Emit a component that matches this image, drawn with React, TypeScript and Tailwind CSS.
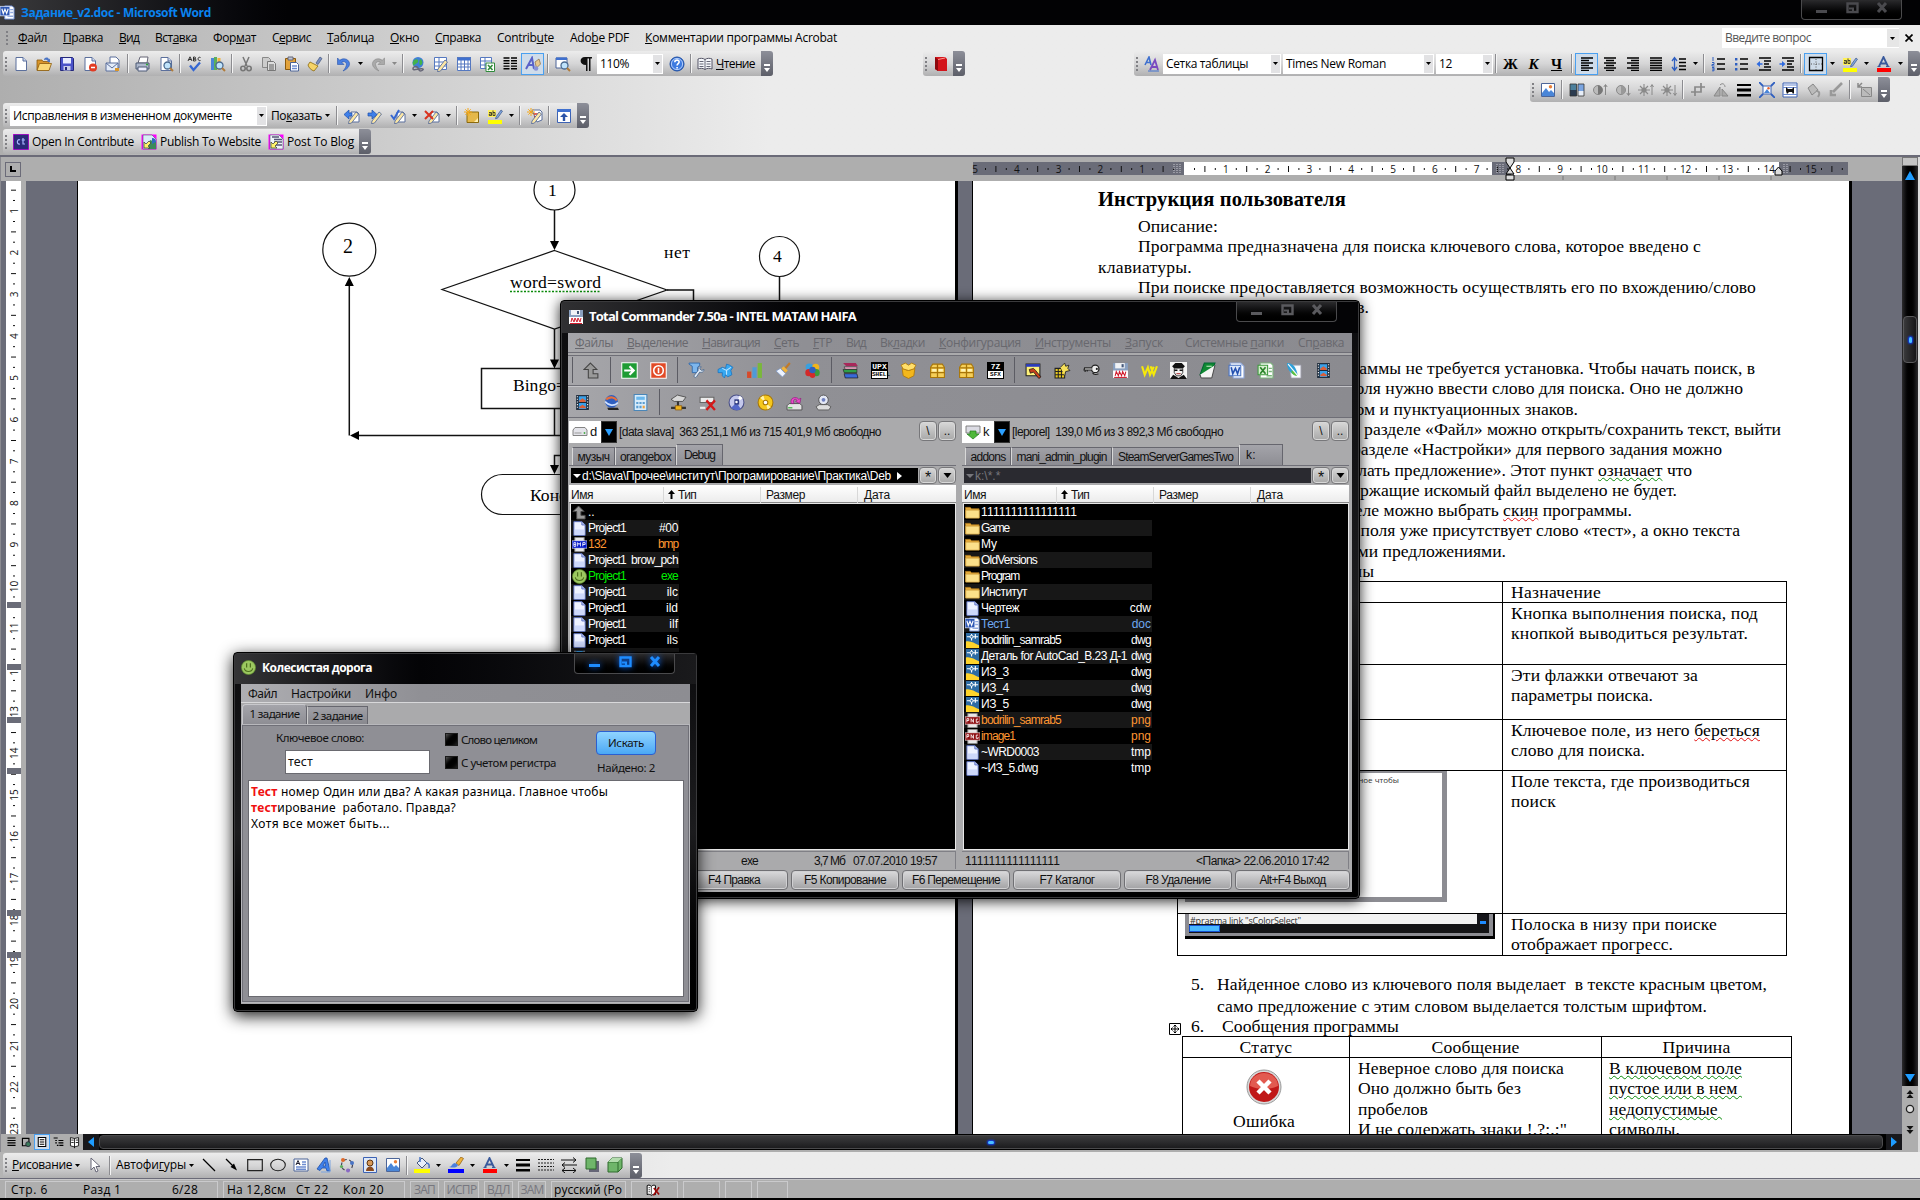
import React, { useLayoutEffect, useRef } from "react";

/* ---------- text helpers ---------- */

// Text whose letter spacing is adjusted so that it takes exactly w pixels.
function F({ w, c = "", children }: { w?: number; c?: string; children: React.ReactNode }) {
  const ref = useRef<HTMLSpanElement>(null);
  useLayoutEffect(() => {
    const el = ref.current;
    if (!el || !w) return;
    el.style.letterSpacing = "0px";
    const natural = el.getBoundingClientRect().width;
    const n = (el.textContent || "").length || 1;
    el.style.letterSpacing = (w - natural) / n + "px";
  }, [w]);
  return (
    <span ref={ref} className={"inline-block shrink-0 whitespace-pre " + c}>
      {typeof children === "string" ? mnemonic(children) : children}
    </span>
  );
}

// "&" in front of a letter underlines it.
function mnemonic(s: string): React.ReactNode {
  const i = s.indexOf("&");
  if (i < 0) return s;
  return (
    <>
      {s.slice(0, i)}
      <u>{s[i + 1]}</u>
      {s.slice(i + 2)}
    </>
  );
}

/* ---------- icons ---------- */

const sheet = <path d="M3 1.5h7l3.500 3.500v9.500h-10.500z" fill="#fff" stroke="#5b6f9c" />;
const fold = <path d="M10 1.500v3.500h3.500" fill="#cdd9f2" stroke="#5b6f9c" />;
const lens = (
  <>
    <circle cx="9.500" cy="9.500" r="3.500" fill="#bfe3fb" stroke="#4b6a90" strokeWidth="1.300" />
    <path d="M12 12l3 3" stroke="#b07b3a" strokeWidth="2" />
  </>
);
const pencil = <path d="M5 13l7-9 2.500 2-7 9-3 .800z" fill="#fbe6a4" stroke="#5b6f9c" strokeWidth=".9" />;
const lines = (xs: number[][], col = "#000") => (
  <path d={xs.map(([x, y, w]) => `M${x} ${y}h${w}`).join("")} stroke={col} strokeWidth="1.400" />
);
const film = (
  <>
    <path d="M2 1h12v14H2z" fill="#1d2a3a" />
    <path d="M4.500 2h7v5.500h-7zM4.500 8.500h7V14h-7z" fill="#3aa0e8" />
    <path d="M5 6l3-2 3 2v1.500H5zM5 12l3-2 3 2v1.500H5z" fill="#d9603a" />
    <path d="M3.200 2v12M12.800 2v12" stroke="#fff" strokeWidth="1" strokeDasharray="1 1.500" />
  </>
);
const box = (
  <>
    <path d="M1.500 5l2-3h9l2 3v9.500h-13z" fill="#f6cf58" stroke="#a97608" />
    <path d="M1.500 5.500h13M1.500 10h13M8 2v12.500" stroke="#a97608" strokeWidth="1.200" />
    <path d="M3 6.500h4v2.500H3zM9 6.500h4v2.500H9z" fill="#fff3b5" />
  </>
);
const disk = (
  <>
    <path d="M1 1h14v14H1z" fill="#8aa0c0" />
    <path d="M3 1h9v5H3z" fill="#f1f3f6" />
    <path d="M9 2h2v3H9z" fill="#44577a" />
    <path d="M1 8h14v7H1z" fill="#fff" />
    <path d="M2 14.500h12" stroke="#d11d2e" />
    <path d="M3 13l1-4 2 4 1-4 2 4 1-4 2 4 1-4" fill="none" stroke="#d11d2e" strokeWidth="1" />
  </>
);
const spark = <path d="M4 0v8M0 4h8M1.300 1.300l5.400 5.400M6.700 1.300L1.300 6.700" stroke="#f3a81c" strokeWidth="1" />;
const hi = (bar: string) => (
  <>
    <path d="M1 2h8v7H1z" fill="#fff15a" />
    <path d="M9 9l5-7 1.500 1.200-5 7-2 .5z" fill="#7fa6e0" stroke="#3d5786" strokeWidth=".7" />
    <path d="M1 12h14v4H1z" fill={bar} />
    <path d="M2 4.500h2.500v3H2.300v-1.500H4.500M6 2.500v5h2v-3H6" fill="none" stroke="#222" strokeWidth=".8" />
  </>
);
const letterA = (bar: string) => (
  <>
    <path d="M3 10.500L7.500 1 12 10.500M5 7.500h5.200" fill="none" stroke="#3a5a9c" strokeWidth="1.800" />
    <path d="M1.500 10.500h3M10 10.500h3.500" stroke="#3a5a9c" strokeWidth="1.200" />
    <path d="M1 12h14v4H1z" fill={bar} />
  </>
);
const sun = (
  <>
    <circle cx="6" cy="8" r="2.600" fill="#8a8a8a" />
    <path d="M6 2v12M0 8h12M2 4l8 8M10 4l-8 8" stroke="#8a8a8a" strokeWidth="1.100" />
  </>
);
const pc = (
  <>
    <path d="M1.500 1.500h13v13h-13z" fill="#fff" stroke="#4c6598" />
    <path d="M2 11l4-5 3 4 2-2 3 3v3H2z" fill="#4a86d8" />
    <circle cx="10.500" cy="4.800" r="1.700" fill="#e8803a" />
  </>
);
const red = "#d9321e";

const ICONS: Record<string, React.ReactNode> = {
  doc: <>{sheet}{fold}</>,
  file: <><path d="M2 .7h8.500l3.500 3.500v11.100H2z" fill="#eef2ff" stroke="#5b70c0" /><path d="M3 9h10v6H3z" fill="#cdd8fa" /><path d="M10.500.7v3.500H14" fill="#b9c6f2" stroke="#5b70c0" /></>,
  open: <><path d="M1 4h5l1 1.500h6V14H1z" fill="#d9952b" stroke="#8b5a0e" strokeWidth=".8" /><path d="M3.500 7.500h12L13 14.500H1z" fill="#fbd978" stroke="#8b5a0e" strokeWidth=".8" /><path d="M8 3c2-2 4-2 5 .500l1-1V6h-3l1-1c-1-1-2-1.500-4-1z" fill="#4a74c4" /></>,
  save: <><path d="M1.500 1.500h12l1 1v12h-13z" fill="#4b53c9" stroke="#24287c" /><path d="M4 2h8v5.500H4z" fill="#e8ecff" /><path d="M4.500 10h7v4.500h-7z" fill="#c9cde8" /><path d="M6 11h2v3H6z" fill="#24287c" /></>,
  perm: <>{sheet}{fold}<circle cx="11" cy="11.500" r="4" fill="#e23b22" /><path d="M9 11.500h4" stroke="#fff" strokeWidth="1.600" /></>,
  mail: <><path d="M5 1h6l3 3v8H5z" fill="#fff" stroke="#5b6f9c" /><path d="M1 7h12v8H1z" fill="#e4ecf8" stroke="#5b6f9c" /><path d="M1 7l6 5 6-5" fill="none" stroke="#5b6f9c" /><path d="M10 12h4v3h-4z" fill="#d9952b" /></>,
  print: <><path d="M5 1h8l-1 6H3z" fill="#fff" stroke="#667" /><path d="M1 7h13v6H1z" fill="#aeb8cc" stroke="#4d5a74" /><path d="M3 11h9v4H3z" fill="#eef" stroke="#4d5a74" /><path d="M11 8.500h2" stroke="#2ea838" strokeWidth="1.500" /></>,
  preview: <>{sheet}{fold}{lens}</>,
  spell: <><path d="M1 5L3 .8 5 5M1.700 3.500h2.600M6.500 1v4h1.300c1.700 0 1.700-2 0-2H6.500h1c1.500 0 1.500-2 0-2zM13.500 1.500c-3-1.500-3.500 4 0 3" fill="none" stroke="#222" strokeWidth=".9" /><path d="M3 9.500l3.500 4.500L13 6.500" fill="none" stroke="#3567d2" strokeWidth="2.300" /></>,
  research: <><path d="M1 2h3v12H1z" fill="#4a86d8" /><path d="M4 1h3v13H4z" fill="#5bb05a" /><path d="M7.500 2h3v12h-3z" fill="#f0b43c" />{lens}</>,
  cut: <><path d="M5 1l4 9M11 1L7 10" stroke="#777" strokeWidth="1.500" /><circle cx="5" cy="12.500" r="2.200" fill="none" stroke="#777" strokeWidth="1.600" /><circle cx="11" cy="12.500" r="2.200" fill="none" stroke="#777" strokeWidth="1.600" /></>,
  copy: <><path d="M1.500 1.500h6l2 2v8h-8z" fill="#ccc" stroke="#888" /><path d="M6.500 5.500h6l2 2v7h-8z" fill="#ddd" stroke="#777" />{lines([[8, 9, 5], [8, 11, 5], [8, 13, 5]], "#888")}</>,
  paste: <><path d="M1.500 2.500h10v11h-10z" fill="#e2a33c" stroke="#8b5a0e" /><path d="M4 1h5v3H4z" fill="#bcc4d4" stroke="#667" /><path d="M6.500 6.500h6l2 2v6.500h-8z" fill="#fff" stroke="#4c6598" />{lines([[8, 10, 5], [8, 12.500, 5]], "#6d8cd0")}</>,
  brush: <><path d="M9 7l4-6 2 1.500-4 6z" fill="#7b8fc4" stroke="#44577a" strokeWidth=".7" /><path d="M3 6l8 4-4 5c-3-1-5-3-6-6z" fill="#f6d468" stroke="#8b6a0e" strokeWidth=".8" /></>,
  undo: <path d="M1.500 2v6.500h6.500L5.700 6.200C9 4.500 12 7 9.500 11.500 8.800 13 8 14 7 15c6-2.500 8-7 5.500-10C10.500 2.300 6.500 2.200 3.800 4.300z" fill="#4a7fe0" stroke="#2c54a8" strokeWidth=".6" />,
  redo: <path d="M14.500 2v6.500H8l2.300-2.300C7 4.500 4 7 6.500 11.500 7.200 13 8 14 9 15 3 12.500 1 8 3.500 5 5.500 2.300 9.500 2.200 12.200 4.300z" fill="#aaa" stroke="#888" strokeWidth=".6" />,
  globe: <><circle cx="8" cy="6.500" r="5.500" fill="#3f7fd6" /><path d="M4 4c3-2 5 0 4 2s-4 2-4 4c-2-2-1.500-4 0-6zM10 3c3 1 3 5 1 6s-2-4-1-6z" fill="#43b24a" /><path d="M3 13c0-3 4-3 5-1s4 0 5 1-3 3-4 1-6 1-6-1z" fill="none" stroke="#667" strokeWidth="1.500" /></>,
  tblpen: <><path d="M1.500 1.500h12v12h-12zM1.500 6h12M1.500 10h12M6 1.500v12" fill="#fff" stroke="#5578c0" />{pencil}</>,
  tbl: <><path d="M1 1.500h14v13H1z" fill="#fff" /><path d="M1 1h14v3.500H1z" fill="#3f70cf" /><path d="M1.500 1.500h13v13h-13zM1.500 8h13M1.500 11h13M5 4v10.500M8.500 4v10.500M12 4v10.500" fill="none" stroke="#5578c0" /></>,
  xltbl: <><path d="M1.500 1.500h11v11h-11zM1.500 5h11M1.500 9h11M6 1.500v11" fill="#fff" stroke="#5578c0" /><path d="M7 7h8.500v8.500H7z" fill="#fff" stroke="#2f8a3a" /><path d="M9 9l4.500 5M13.500 9L9 14" stroke="#2f8a3a" strokeWidth="1.600" /></>,
  cols: lines([[1.500, 2, 6], [1.500, 4.700, 6], [1.500, 7.400, 6], [1.500, 10.100, 6], [1.500, 12.800, 6], [9, 2, 6], [9, 4.700, 6], [9, 7.400, 6], [9, 10.100, 6], [9, 12.800, 6]]),
  draw: <><path d="M1 13L7 2l2 11M3.500 9h5" fill="none" stroke="#5a62c8" strokeWidth="2" /><path d="M10 6l4-3 1.500 5-4 4z" fill="#e7c890" stroke="#8b6a3e" strokeWidth=".7" /><circle cx="11" cy="12.500" r="2.300" fill="#8892d8" /></>,
  map: <><path d="M1 2h11v10H1z" fill="#fff" stroke="#4c6598" /><path d="M1 1.500h11V4H1z" fill="#3f70cf" />{lens}</>,
  para: <path d="M7 1h7v1.500h-1.500V15H11V2.500H9.500V15H8V9C1 9 1 1 7 1z" fill="#111" />,
  help: <><circle cx="8" cy="8" r="7" fill="#3d7be0" stroke="#1f4da0" /><circle cx="8" cy="8" r="5.600" fill="none" stroke="#cfe0ff" strokeWidth=".8" /><path d="M5.800 6.200c.2-3 4.600-2.600 4.300 0-.2 1.500-2 1.500-2 3.300M8.100 11v1.600" fill="none" stroke="#fff" strokeWidth="1.600" /></>,
  book: <><path d="M8 3.500C6 2 3 2 1 3v10c2-1 5-1 7 .500 2-1.500 5-1.500 7-.500V3c-2-1-5-1-7 .500z" fill="#f5f7fb" stroke="#556" /><path d="M8 3.500v10M2.500 5.500h4M2.500 8h4M2.500 10.500h4M9.500 5.500h4M9.500 8h4M9.500 10.500h4" stroke="#556" strokeWidth=".9" /></>,
  proof: <><path d="M6 3C4 1 2 1 .8 2v11c2-1 4 0 5.500 1C8 12.500 9 12.500 11 13V2C9 1 7.500 1.500 6 3z" fill="#fff" stroke="#000" strokeWidth="1.200" /><path d="M6 3v10M2.500 4.500h2M2.500 7h2M2.500 9.500h2" stroke="#222" strokeWidth=".9" /><path d="M9 5l6.500 8M15.500 4L8.500 14" stroke="#9c0808" strokeWidth="2" /></>,
  redbook: <><path d="M2 1h10l2 2v12H5l-3-2z" fill="#d3141b" /><path d="M2 1l3 2.500V15l-3-2z" fill="#8d080d" /><path d="M5 3.500L12 2" stroke="#ff9a90" /></>,
  aa: <><path d="M1 9L5 1l2 8M2.500 6.500h4" fill="none" stroke="#3f70cf" strokeWidth="1.600" /><path d="M6 14L11 4l3 10M7.500 11h5.500" fill="none" stroke="#7a4ac0" strokeWidth="1.800" /><path d="M4 15h11" stroke="#3f70cf" /></>,
  al: lines([[2, 2, 12], [2, 4.500, 8], [2, 7, 12], [2, 9.500, 8], [2, 12, 12], [2, 14.400, 8]]),
  ac: lines([[2, 2, 12], [4, 4.500, 8], [2, 7, 12], [4, 9.500, 8], [2, 12, 12], [4, 14.400, 8]]),
  ar: lines([[2, 2, 12], [6, 4.500, 8], [2, 7, 12], [6, 9.500, 8], [2, 12, 12], [6, 14.400, 8]]),
  aj: lines([[2, 2, 12], [2, 4.500, 12], [2, 7, 12], [2, 9.500, 12], [2, 12, 12], [2, 14.400, 12]]),
  sp: <>{lines([[8, 3, 7], [8, 6.500, 7], [8, 10, 7], [8, 13.500, 7]])}<path d="M3.500 2v12M1 5l2.500-3.500L6 5M1 11l2.500 3.500L6 11" fill="none" stroke="#2f5fc0" strokeWidth="1.300" /></>,
  num: <>{lines([[7, 3, 8], [7, 8, 8], [7, 13, 8]])}<path d="M3 1v4M2 6.500h2v2H2v1.500h2.500M2 11.500h2v3.300H2M2 13h2" fill="none" stroke="#2f5fc0" strokeWidth="1" /></>,
  bul: <>{lines([[7, 3, 8], [7, 8, 8], [7, 13, 8]])}<path d="M2 2h2.400v2.400H2zM2 7h2.400v2.400H2zM2 12h2.400v2.400H2z" fill="#2f5fc0" /></>,
  outd: <>{lines([[3, 2, 12], [8, 5, 7], [8, 8, 5], [8, 11, 7], [3, 14, 12]])}<path d="M6.500 7.200H4V5L.5 8 4 11V8.800h2.500z" fill="#2f6be0" /></>,
  ind: <>{lines([[3, 2, 12], [8, 5, 7], [8, 8, 5], [8, 11, 7], [3, 14, 12]])}<path d="M.5 7.200H3V5L6.500 8 3 11V8.800H.5z" fill="#2f6be0" /></>,
  bord: <><path d="M1.500 1.500h13v13h-13z" fill="none" stroke="#000" strokeWidth="1.300" /><path d="M8 3v11M3 8h11" stroke="#555" strokeDasharray="1 1.500" /></>,
  hi: hi("#ffff00"),
  fa: letterA("#ff0000"),
  pic: pc,
  color: <><path d="M1 2h6.500v12H1z" fill="#4c7f9c" /><path d="M1 8h6.500v6H1z" fill="#2c3c50" /><path d="M9 2h6v12H9z" fill="#7aa4e0" /><path d="M9 9h6v5H9z" fill="#e8eef8" /><path d="M1 2h6.500v12H1zM9 2h6v12H9z" fill="none" stroke="#333" strokeWidth=".8" /></>,
  cu: <><circle cx="6" cy="8" r="4.500" fill="#bbb" stroke="#888" /><path d="M6 3.500v9a4.500 4.500 0 0 0 0-9z" fill="#777" /><path d="M13.500 13V3M11.800 5l1.700-2.500L15.200 5" fill="none" stroke="#888" /></>,
  cd: <><circle cx="6" cy="8" r="4.500" fill="#bbb" stroke="#888" /><path d="M6 3.500v9a4.500 4.500 0 0 0 0-9z" fill="#999" /><path d="M13.500 3v10M11.800 11l1.700 2.500 1.700-2.500" fill="none" stroke="#888" /></>,
  bu: <>{sun}<path d="M14 13V3M12.500 5L14 2.500 15.500 5" fill="none" stroke="#888" /></>,
  bd: <>{sun}<path d="M14 3v10M12.500 11l1.500 2.500 1.500-2.500" fill="none" stroke="#888" /></>,
  crop: <path d="M5 14V5h10M1 10h10V1" fill="none" stroke="#888" strokeWidth="1.700" />,
  rot: <><path d="M1 14L7 5v9zM9 14V7l6 7z" fill="#aaa" stroke="#888" /><path d="M7 3c3-3 5 0 5 2" fill="none" stroke="#888" /></>,
  thick: <><path d="M1 3h14" stroke="#000" strokeWidth="2" /><path d="M1 8h14" stroke="#000" strokeWidth="3" /><path d="M1 13.300h14" stroke="#000" strokeWidth="2.600" /></>,
  compress: <><path d="M4 4h8v8H4z" fill="#fff" stroke="#3c62b4" /><path d="M5 11l3-4 3 4z" fill="#4a86d8" /><circle cx="9.500" cy="6.200" r="1.200" fill="#e8602a" /><path d="M0 0l4 4M16 0l-4 4M0 16l4-4M16 16l-4-4" stroke="#2f5fc0" strokeWidth="1.800" /></>,
  wrap: <><path d="M1 1h14v14H1z" fill="#fff" stroke="#3c62b4" /><path d="M1 3h14M1 5.500h14M1 12.500h14" stroke="#6d8cd0" /><path d="M4 5l2 2h4l2-2v6l-1 1-1-2H7l-2 2-1-3z" fill="#111" /></>,
  bucketg: <><path d="M3 6l5-4 5 6-6 5z" fill="#bbb" stroke="#888" /><path d="M11 9c4 0 4 3 2 6" fill="none" stroke="#999" strokeWidth="2" /></>,
  trans: <path d="M14 1L5 10M3 8v5h5" fill="none" stroke="#999" strokeWidth="2.600" />,
  reset: <><path d="M4.500 5.500h10v9h-10z" fill="#bbb" stroke="#888" /><path d="M1 5l4-4M1 1v4h4" fill="none" stroke="#888" strokeWidth="1.500" /><path d="M6 7l7 6" stroke="#888" /></>,
  prev: <><path d="M7 4h6l2 2v8H7z" fill="#fff" stroke="#5b6f9c" />{pencil}<path d="M8 5H5V2L0 6.500 5 11V8h3z" fill="#3f80ea" stroke="#1e4fa8" strokeWidth=".7" /></>,
  next: <>{pencil}<path d="M1 5h4V2l5 4.500L5 11V8H1z" fill="#3f80ea" stroke="#1e4fa8" strokeWidth=".7" /></>,
  accept: <><path d="M7 4h6l2 2v8H7z" fill="#fff" stroke="#5b6f9c" />{pencil}<path d="M1 7l3 4 5-9" fill="none" stroke="#3567d2" strokeWidth="2" /></>,
  reject: <><path d="M7 4h6l2 2v8H7z" fill="#fff" stroke="#5b6f9c" />{pencil}<path d="M1 3l8 8M9 3l-8 8" stroke={red} strokeWidth="2" /></>,
  note: <><path d="M3 4h11.500v10.500H3z" fill="#e5b84a" stroke="#8b6a0e" /><path d="M10 14l4-4v4z" fill="#fff0b0" />{spark}</>,
  track: <><path d="M5 2h8l2 2v8l-5 2z" fill="#fff" stroke="#5b6f9c" />{lines([[7, 6, 5], [7, 9, 5]], red)}{pencil}{spark}</>,
  pane: <><path d="M1.500 1.500h13v13h-13z" fill="#fff" stroke="#3c62b4" /><path d="M1 1h14v3H1z" fill="#3f70cf" /><path d="M8 5l4 4H9.200v4H6.800V9H4z" fill="#2c54a8" /></>,
  ct: <><path d="M0 0h16v16H0z" fill="#2b2a78" stroke="#f0f" strokeWidth="1" /><path d="M7 6C4 4 3 11 7 10M10 4v6h2M8.700 6H12" fill="none" stroke="#a8b4ff" strokeWidth="1.200" /></>,
  pub: <><path d="M.5.5h15v15H.500z" fill="#f0f" /><path d="M2 1h9l4 4v10H2z" fill="#d9ecf6" stroke="#557" strokeWidth=".6" /><path d="M9 6l6 2v7H7z" fill="#3a8a5a" /><path d="M11 4c3 0 4 2 4 4l-4 2z" fill="#2f6ac0" /><path d="M3 14V8l2 2 3-3 2 2-3 3 2 2z" fill="#fff36a" stroke="#333" strokeWidth=".7" /></>,
  blog: <><path d="M.5.5h15v15H.500z" fill="#f0f" /><path d="M2 1h9l4 4v10H2z" fill="#eef4fa" stroke="#557" strokeWidth=".6" /><path d="M4 3h7M6 5.500h8M6 8h8M6 11h8" stroke="#557" strokeWidth="1.500" /><path d="M3 14V8l2 2 3-3 2 2-3 3 2 2z" fill="#fff36a" stroke="#333" strokeWidth=".7" /></>,
  cursor: <path d="M4 1v12l3-3 2 5 2-1-2-4.500h4z" fill="#fff" stroke="#667" />,
  line: <path d="M2 2l12 12" stroke="#000" strokeWidth="1.200" />,
  arrow: <><path d="M2 2l8 8" stroke="#000" strokeWidth="1.200" /><path d="M13 13.500L6.500 10 10 6.500z" /></>,
  rect: <path d="M.7 2.700h14.600v11H.7z" fill="none" stroke="#222" strokeWidth="1.200" />,
  oval: <ellipse cx="8" cy="8" rx="7.300" ry="5.800" fill="none" stroke="#222" strokeWidth="1.100" />,
  txt: <><path d="M1 2h14v12H1z" fill="#fff" stroke="#4c6598" /><path d="M3 8l2-4.500L7 8M3.600 6.500h2.700" fill="none" stroke="#223" />{lines([[9, 5, 4], [9, 7.500, 4], [3, 10, 10], [3, 12.200, 10]], "#6d8cd0")}</>,
  wa: <><path d="M1 12L9 1h2l3 13h-3l-1-3H6l-2 2.500zM7 9h2.500L9 5z" fill="#3f80ea" stroke="#1e4fa8" strokeWidth=".8" /><path d="M14 3v12H5" fill="none" stroke="#7aa4e0" /></>,
  diag: <><circle cx="8" cy="8" r="5.500" fill="none" stroke="#445" strokeDasharray="3 2.500" strokeWidth="1.200" /><circle cx="4" cy="3" r="2" fill="#e06a2a" /><circle cx="13" cy="6" r="2" fill="#4a74c4" /><circle cx="9" cy="13.500" r="2" fill="#8a6ac4" /><circle cx="2.500" cy="9.500" r="1.600" fill="#5bb05a" /></>,
  clip: <><path d="M1.500.500h13v15h-13z" fill="#dfe9f8" stroke="#3c62b4" /><circle cx="8" cy="6" r="3" fill="#d89a5a" stroke="#5c3412" /><path d="M4 14c0-6 8-6 8 0z" fill="#8b4a1e" /></>,
  bucket: <><path d="M3 6l5-5 5 5-5 5z" fill="#e8eefa" stroke="#44577a" /><path d="M6 0v5M12 6c3 0 3.500 2 3 5" fill="none" stroke="#4a74c4" strokeWidth="1.500" /><path d="M0 12h16v4H0z" fill="#ffff00" /></>,
  pen: <><path d="M8 6l5-6 2.500 1.500-4.500 7z" fill="#f0b43c" stroke="#8b5a0e" strokeWidth=".7" /><path d="M1 10c3 0 3-4 6-4l3 2c-1 3-5 3-9 2z" fill="#4a7fe0" /><path d="M0 12h16v4H0z" fill="#0000ff" /></>,
  wdash: <path d="M0 2.500h16M0 6h16M0 9.500h16M0 13h16" stroke="#222" strokeDasharray="2 1" strokeWidth="1.200" />,
  arrs: <path d="M0 3h15M12 .500L15 3l-3 2.500M16 8H1M4 5.500L1 8l3 2.500M1 13.500h14M4 11l-3 2.500L4 16M12 11l3 2.500-3 2.500" fill="none" stroke="#111" />,
  shadow: <><path d="M5 4h10v11H5z" fill="#667" /><path d="M2 1h10v11H2z" fill="#6fb56a" stroke="#2f6a2c" /></>,
  cube: <><path d="M1 5l4-4h10v10l-4 4H1z" fill="#6fb56a" stroke="#2f6a2c" /><path d="M1 5h10v10M11 5l4-4" fill="none" stroke="#2f6a2c" /><path d="M5 1h10l-4 4H1z" fill="#b3dcae" /></>,
  word: <><path d="M5 1h8l2 2v12H5z" fill="#fff" stroke="#6d8cd0" />{lines([[10, 5, 4], [10, 8, 4], [8, 12, 6]], "#8fa8dc")}<path d="M0 1.500h10.500v10H0z" fill="#2f58b4" stroke="#dfe8ff" strokeWidth=".8" /><path d="M2 4l1.500 5 1.800-4.500 1.800 4.500L8.700 4" fill="none" stroke="#fff" strokeWidth="1.200" /></>,
  wordg: <><path d="M2 1h10l3 3v11H5z" fill="#fff" stroke="#8fa8dc" /><path d="M1 3h11v10H1z" fill="#dce8fb" stroke="#4a74c4" /><path d="M3 5l1.500 6L7 6l2 5 2-6" fill="none" stroke="#2450b0" strokeWidth="1.500" /></>,
  excel: <><path d="M3 1h10l2 2v12H3z" fill="#fff" stroke="#7bb57b" /><path d="M1 3h9v9H1z" fill="#d8f0d0" stroke="#3c9a3c" /><path d="M3 5l5 6M8 5l-5 6" stroke="#2a842a" strokeWidth="1.600" />{lines([[11, 6, 3], [11, 9, 3], [9, 13, 5]], "#7bb57b")}</>,
  up: <path d="M7 1l6 6H9.500v4H14v4H5V7H1z" fill="#999" stroke="#444" />,
  go: <><path d="M.7.7h14.600v14.600H.7z" fill="#1e9c34" stroke="#fff" /><path d="M3 8h8M8 4l4 4-4 4" fill="none" stroke="#fff" strokeWidth="2" /></>,
  off: <><path d="M.7.7h14.600v14.600H.7z" fill="#e24a26" stroke="#fff" /><circle cx="8" cy="8" r="4.500" fill="none" stroke="#fff" strokeWidth="1.500" /><path d="M8 5.500v5" stroke="#fff" strokeWidth="1.500" /></>,
  tool: <><path d="M1 1h10v2L9 5v5H4V4L1 2z" fill="#7db6ec" stroke="#2c64a8" strokeWidth=".8" /><path d="M15 7c0 3-3 3-4 2.500L8 14c-1 1.500-3 0-2-1.500L9.500 8c-.5-2 1-4 3-3.500L11 6.500 13 8z" fill="#dfe9f5" stroke="#4b6a90" strokeWidth=".8" /></>,
  bird: <><path d="M1 7l4-2 3 1 1-4 3 1 3 2-2 3 1 4-4 2-2-2-1 3-2-2 0-3-4 0z" fill="#38a8f0" stroke="#1670c0" strokeWidth=".7" /><path d="M5 6l4 2 4-3M9 8v4" fill="none" stroke="#bfe4ff" /></>,
  chart: <><path d="M1 9h4v6H1z" fill="#d84a2a" /><path d="M6 5h4v10H6z" fill="#4f9ad8" /><path d="M11 1h4v14h-4z" fill="#7ab83a" /></>,
  broom: <><path d="M14 1L8 8" stroke="#c07a2a" strokeWidth="2" /><path d="M5 6l5 5-3 3L1 8.500z" fill="#eef4ff" stroke="#7b96c4" strokeWidth=".7" /><path d="M7 5l4 4" stroke="#f0b43c" strokeWidth="3" /></>,
  balls: <><circle cx="5" cy="5" r="3.500" fill="#38a0e0" /><circle cx="11" cy="5" r="3.300" fill="#f0b41c" /><circle cx="4.500" cy="10" r="3.300" fill="#d32a2a" /><circle cx="11.500" cy="10" r="3.300" fill="#3c9a3c" /><circle cx="8" cy="12.500" r="2.600" fill="#d32a2a" /><circle cx="8" cy="7.500" r="3" fill="#2f5fc0" /></>,
  rar: <><path d="M1 1h12l2 3H4z" fill="#a8285a" /><path d="M2 4.500h12v2.500H3z" fill="#e8a0c0" stroke="#333" strokeWidth=".6" /><path d="M1 7h13v3H2z" fill="#2fa048" stroke="#222" strokeWidth=".6" /><path d="M2 11h12l1 4H3z" fill="#3a6ad8" stroke="#111" strokeWidth=".6" /></>,
  smbox: <><path d="M2 6l6 2 6-2-1 7-5 2.500L3 13z" fill="#f3b71c" stroke="#b07808" strokeWidth=".8" /><path d="M1 3l4-2 3 2 3-2 4 2-2 3.500-5 1.500-5-1.500z" fill="#ffdf6a" stroke="#b07808" strokeWidth=".8" /></>,
  box: box,
  hammer: <><path d="M1 2h13v11H1z" fill="#fff27a" stroke="#222" /><path d="M1 2h13v2.500H1z" fill="#2a3cc0" /><path d="M4 7l4-1 2 2 5 6-2 1.500-5-6-3 1z" fill="#c8401c" stroke="#111" strokeWidth=".7" /></>,
  cube3: <><path d="M1 6h9v9H1z" fill="#e8c820" stroke="#222" /><path d="M4 6v9M7 6v9M1 9h9M1 12h9" stroke="#222" /><path d="M6 5l4-4 1 3 3-1-1 3 2 2-4 1-1 4" fill="#f6e05a" stroke="#222" strokeWidth=".8" /></>,
  key: <><circle cx="11.500" cy="6.500" r="3.500" fill="#eee" stroke="#222" strokeWidth="1.200" /><circle cx="13" cy="6.500" r="1" fill="#222" /><path d="M8.500 5.500H1.500L1 7.500h7M2 7v2.500M4 7v2M9 10c1 2 4 2 5.500 1" fill="#eee" stroke="#222" strokeWidth="1.100" /></>,
  disk: disk,
  vv: <path d="M1 4l2.500 8L6.500 5l2 7L12 4.500M9 4l3 8 3-8" fill="none" stroke="#f5e90a" strokeWidth="2" />,
  face: <><path d="M0 0h16v16H0z" fill="#f4f4f4" /><path d="M2 4l3-3h6l3 3-2 2H4zM4 7h3v1.500H4zM9 7h3v1.500H9zM0 16l3-4 5 3 5-3 3 4z" fill="#111" /><path d="M4 6v4l2 3h4l2-3V6" fill="none" stroke="#222" strokeWidth=".8" /><path d="M6 11h4" stroke="#a33" /></>,
  greenbook: <><path d="M5 1h10l-4 11H1z" fill="#0f8a32" stroke="#063" /><path d="M1 12l1 3h10l3-12" fill="#f4f4f4" stroke="#333" strokeWidth=".8" /><path d="M7 4h5" stroke="#bfe8c0" /></>,
  feather: <><path d="M3 3h11v12H5z" fill="#f8fafc" stroke="#aab" strokeWidth=".7" /><path d="M1 1c6 0 9 5 10 12C5 12 1 8 1 1z" fill="#2fa0d8" /><path d="M5 8c3 0 5 2 6 5-4 0-6-2-6-5z" fill="#5cc040" /><path d="M2 2l10 12" stroke="#fff" /></>,
  film: film,
  ie: <><circle cx="8" cy="7" r="6" fill="#2f5fc0" /><path d="M3 5c4-3 8-2 10 1" fill="none" stroke="#e8703a" strokeWidth="2" /><path d="M2 7c3 4 9 5 12 1" fill="none" stroke="#cfe0ff" strokeWidth="1.600" /><path d="M4 13h10l1 2H5z" fill="#222" /></>,
  calc: <><path d="M2 .5h12v15H2z" fill="#d8ecfa" stroke="#4a86b8" /><path d="M4 2.500h8v3H4z" fill="#6ab8ee" /><path d="M4 7.500h2v2H4zM7 7.500h2v2H7zM10 7.500h2v2h-2zM4 11h2v2.500H4zM7 11h2v2.500H7z" fill="#5a9cd0" /><path d="M10 11h2v2.500h-2z" fill="#f0a03a" /></>,
  net: <><path d="M1 5l6-4 8 2-3 4H4z" fill="#d9d9d9" stroke="#444" strokeWidth=".8" /><path d="M7.500 7v5M1 13h14" stroke="#333" strokeWidth="2" /><path d="M5 11h6v4H5z" fill="#f0b41c" stroke="#8b5a0e" strokeWidth=".7" /></>,
  netx: <><path d="M1 3h13v5H1z" fill="#ececec" stroke="#666" /><path d="M1 13h5" stroke="#eee" strokeWidth="2" /><path d="M7 6l8 9M15 6l-8 9" stroke="#d51818" strokeWidth="2.200" /></>,
  cd1: <><circle cx="8" cy="8" r="7" fill="#c4c8ec" stroke="#4a5088" /><path d="M8 8L3 13A7 7 0 0 0 12 14z" fill="#5468c8" /><path d="M8 8l6-4-3-2.500z" fill="#fff" /><path d="M6 5h4.500v5H6z" fill="#303c80" /><circle cx="8" cy="7.500" r="1.200" fill="#fff" /></>,
  cd2: <><circle cx="8" cy="8" r="7" fill="#f6c81c" stroke="#a87808" /><path d="M8 8L3 3.500 6 1.500zM8 8l5 4.500-3 2z" fill="#fff2a8" /><circle cx="8" cy="8" r="2.200" fill="#fff" stroke="#a87808" /></>,
  dr: <><path d="M1 11l2-2h10l2 2v4H1z" fill="#e4e4e4" stroke="#444" strokeWidth=".8" /><path d="M5 9c-2-6 5-7 7-4l2-1-1 5-4-2 1.500-1C9 4 6 5 7.500 9z" fill="#e84ac8" stroke="#8a1878" strokeWidth=".6" /><path d="M2 13h4" stroke="#2a2" /></>,
  cam: <><circle cx="8" cy="5.500" r="4.500" fill="#e4e8f4" stroke="#555" strokeWidth=".9" /><circle cx="8" cy="5.500" r="1.800" fill="#7080c0" /><path d="M1 12l3-2h8l3 2-2 3H3z" fill="#ddd" stroke="#555" strokeWidth=".8" /></>,
  smile: <><circle cx="8" cy="8" r="7.500" fill="#9cc860" stroke="#5f8f2c" strokeWidth=".7" /><path d="M6 3.500v4.500M10 3.500v4.500" stroke="#4d6f1c" strokeWidth="1.300" /><path d="M3.500 9c1 4.500 8 4.500 9 0" fill="none" stroke="#4d6f1c" strokeWidth="1.100" /></>,
  folder: <><path d="M.5 2.500h5l1.500 1.500h8v9.500H.500z" fill="#e3a93a" stroke="#a8741a" strokeWidth=".8" /><path d="M.8 5.500h14.400v8.500H.800z" fill="#fbe08a" stroke="#c99a3a" strokeWidth=".7" /></>,
  bmp: <><path d="M3 .5h10v15H3z" fill="#e8e8e8" stroke="#888" /><path d="M0 4h16v8H0z" fill="#0014c8" stroke="#fff" strokeWidth=".6" /><path d="M2 6v4h2V6zM2 8h2M6 10V6l1.500 2L9 6v4M11.500 10V6h2.500v2h-2.500" fill="none" stroke="#fff" strokeWidth=".9" /></>,
  png: <><path d="M3 .5h10v15H3z" fill="#e8e8e8" stroke="#888" /><path d="M0 4h16v8H0z" fill="#8e0f12" stroke="#fff" strokeWidth=".6" /><path d="M2 10V6h2v2H2M6.500 10V6l2.500 4V6M14 6.500h-2V10h2V8.500" fill="none" stroke="#fff" strokeWidth=".9" /></>,
  dwg: <><path d="M1 0h14v16H1z" fill="#2e6ca4" /><path d="M1 9c5-1 9 2 14 4v3H1z" fill="#ffd42a" /><path d="M2 4h12M7 1v7M11 1v5" stroke="#fff" strokeWidth="1.200" /><circle cx="7" cy="4" r="1.600" fill="#2e6ca4" stroke="#fff" /></>,
  hdd: <><path d="M1 6l2-2.500h10L15 6v5.500H1z" fill="#e4e4ea" stroke="#777" strokeWidth=".9" /><path d="M2.500 9h7" stroke="#999" /><circle cx="12.500" cy="9" r=".9" fill="#4a4" /></>,
  usb: <><path d="M1 2h14v7H1z" fill="#dcdce4" stroke="#777" strokeWidth=".9" /><path d="M8 15L2 10h3V7h6v3h3z" fill="#4fb83a" stroke="#1f7a1a" strokeWidth=".7" /></>,
  v1: lines([[3, 2.500, 10], [3, 5.500, 10], [3, 8.500, 10], [3, 11.500, 10]]),
  v2: <><path d="M3 3h8v9H3z" fill="none" stroke="#000" strokeWidth="1.400" /><circle cx="10" cy="10" r="3" fill="#3a7a5a" stroke="#223" /></>,
  v3: <><path d="M3 2h10v12H3z" fill="#fff" stroke="#000" strokeWidth="1.400" />{lines([[5, 5, 6], [5, 8, 6], [5, 11, 6]])}</>,
  v4: lines([[2, 2.500, 5], [4, 5.500, 2], [8, 5.500, 6], [4, 8.500, 2], [8, 8.500, 6], [6, 11.500, 2], [9, 11.500, 5]]),
  v5: <path d="M8 3L3 2v10l5 1.500 5-1.500V2zM8 3v12M4 5h3M4 8h3M9.500 5h3M9.500 8h3" fill="#fff" stroke="#000" />,
};

function I({ n, c = "size-4" }: { n: string; c?: string }) {
  return (
    <svg viewBox="0 0 16 16" className={"shrink-0 " + c}>
      {ICONS[n]}
    </svg>
  );
}

/* ---------- Word toolbar parts ---------- */

const Sep = ({ c = "w-[7px]" }: { c?: string }) => (
  <div className={"flex h-[19px] shrink-0 justify-center " + c}>
    <div className="h-full w-px bg-[#8c8c90]" />
    <div className="h-full w-px bg-[#f4f4f4]" />
  </div>
);
const Arr = ({ c = "w-[11px]", g }: { c?: string; g?: boolean }) => (
  <div className={"flex shrink-0 justify-center " + c}>
    <svg viewBox="0 0 5 3" className="h-[3px] w-[5px]">
      <path d="M0 0h5L2.500 3z" fill={g ? "#888" : "#000"} />
    </svg>
  </div>
);
const B = ({ n, on }: { n: string; on?: boolean }) => (
  <div
    className={
      "flex h-[22px] w-[23px] shrink-0 items-center justify-center " +
      (on ? "border border-[#4aa0f0] bg-[#cfdcea]" : "")
    }
  >
    <I n={n} />
  </div>
);
const Grip = () => (
  <div className="flex w-[6px] shrink-0 flex-col items-center gap-[2px]">
    <i className="size-[2px] bg-[#808084]" />
    <i className="size-[2px] bg-[#808084]" />
    <i className="size-[2px] bg-[#808084]" />
    <i className="size-[2px] bg-[#808084]" />
  </div>
);
const Bar = ({ c, children }: { c: string; children: React.ReactNode }) => (
  <div className={"flex h-[25px] shrink-0 items-center overflow-hidden rounded-[3px] bg-gradient-to-b from-[#ececec] via-[#d6d6d7] to-[#b0b0b1] " + c}>
    <Grip />
    {children}
    <div className="ml-auto flex h-full w-[12px] shrink-0 flex-col items-center justify-end gap-[2px] bg-gradient-to-b from-[#8d8f99] to-[#5d5f69] pb-[4px]">
      <i className="h-[2px] w-[6px] bg-white" />
      <svg viewBox="0 0 6 4" className="h-[4px] w-[6px]">
        <path d="M0 0h6L3 4z" fill="#fff" />
      </svg>
    </div>
  </div>
);
const Combo = ({ c, t, w }: { c: string; t: string; w: number }) => (
  <div className={"flex h-[20px] shrink-0 items-center bg-white " + c}>
    <F w={w} c="ml-[3px]">{t}</F>
    <div className="ml-auto flex h-full w-[11px] items-center justify-center border border-white bg-[#e2e2e4]">
      <Arr />
    </div>
  </div>
);

const MENU: [string, number][] = [
  ["&Файл", 29], ["&Правка", 40], ["&Вид", 20], ["Вст&авка", 42], ["Фор&мат", 43], ["С&ервис", 39],
  ["&Таблица", 47], ["&Окно", 29], ["&Справка", 46], ["Contrib&ute", 57], ["Ado&be PDF", 59],
  ["&Комментарии программы Acrobat", 192],
];

/* ---------- window caption buttons ---------- */

function Caption({ color, glow }: { color: string; glow?: boolean }) {
  return (
    <div className="flex h-[20px] w-[101px] items-center justify-center rounded-b border border-t-0 border-[#4a4a4c] bg-gradient-to-b from-[#2b2b2d] to-black">
      <svg viewBox="0 0 80 18" className={"mb-[3px] h-[18px] w-[80px] " + (glow ? "drop-shadow-[0_0_3px_#0a6cff]" : "")}>
        <g fill="none" stroke={color} strokeWidth="3">
          <path d="M4 12.500h11" />
          <path d="M35.500 4.500h10v8.500h-10z" strokeWidth="2.400" />
          <path d="M37 9.500h4V13" strokeWidth="2" />
          <path d="M66 4l8 9M74 4l-8 9" />
        </g>
      </svg>
    </div>
  );
}

/* ---------- rulers ---------- */

function HRuler() {
  const x = (n: number) => 211 + n * 41.8;
  const ticks: React.ReactNode[] = [];
  const numbers: React.ReactNode[] = [];
  for (let n = -5; n <= 15; n++) {
    if (n !== 0) numbers.push(<text key={n} x={x(n)} y="16" textAnchor="middle">{Math.abs(n)}</text>);
    ticks.push(<path key={n} d={`M${x(n) + 20.9} 9v6M${x(n) + 10.5} 11v2M${x(n) + 31.3} 11v2`} />);
  }
  return (
    <svg width="876" height="24" className="ml-[952px] shrink-0 overflow-visible font-['Open_Sans'] text-[10px]">
      <rect y="5" width="875" height="13" fill="#6a6c78" />
      <rect x="211" y="5" width="308" height="13" fill="#fff" />
      <rect x="538" y="5" width="268" height="13" fill="#fff" />
      <g stroke="#111">{ticks}</g>
      <g fill="#111">{numbers}</g>
      <path d="M201 7v9M204 7v9M207 7v9M524 7v9M527 7v9M530 7v9M811 7v9M814 7v9" stroke="#c8c8d0" strokeDasharray="1 1" />
      <path d="M533 1h8v4l-4 6-4-6zM533 17l4-6 4 6zM533 18h8v5h-8zM802 18v-4l3.500-4 3.500 4v4z" fill="#ddd" stroke="#000" />
      <path d="M590 19v4M642 19v4M694 19v4M746 19v4M798 19v4" stroke="#777" />
    </svg>
  );
}

function VRuler() {
  const out: React.ReactNode[] = [];
  for (let n = 0; n <= 23; n++) {
    const y = 30 + (n - 1) * 41.72;
    if (n > 0)
      out.push(
        <text key={n} transform={`translate(11.500 ${y}) rotate(-90)`} textAnchor="middle" fill="#111">
          {n}
        </text>
      );
    out.push(<path key={"t" + n} d={`M5 ${y + 20.9}h5M7 ${y + 10.500}h2M7 ${y + 31.200}h2`} stroke="#111" />);
  }
  return (
    <svg width="15" height="953" className="shrink-0 bg-white font-['Open_Sans'] text-[10px]">
      {out}
      {[421, 483, 536, 587, 729, 771].map((y) => (
        <rect key={y} x="1" y={y} width="14" height="6" fill="#6a6c78" />
      ))}
    </svg>
  );
}

/* ---------- left page: flow chart ---------- */

function FlowChart() {
  return (
    <svg viewBox="78 181 877 953" width="877" height="953" className="font-['Liberation_Serif'] text-[17.600px]">
      <g fill="none" stroke="#111" strokeWidth="1.200">
        <ellipse cx="554.500" cy="190" rx="20.500" ry="20" />
        <circle cx="349.300" cy="249.700" r="26.500" />
        <circle cx="779.500" cy="256.500" r="20" />
        <path d="M554.500 210v35M554.500 329v34M554.500 409v27M349.300 283v152.500M355 435.500h338.500V290H667M554.500 468v-12.500h80M779.500 276.500v40" strokeWidth="1.500" />
        <path d="M554.500 250.500L667 290l-112.500 39L442 289.500z" />
        <path d="M481.500 368.500h147v40h-147z" strokeWidth="1.500" />
        <rect x="481.500" y="474.500" width="147" height="40" rx="21" />
      </g>
      <path d="M554.500 250l-4.500-9h9zM554.500 368.500l-4.500-9h9zM554.500 474l-4.500-9h9zM349.300 277l-4.500 9h9zM350 435.500l9-4.500v9z" />
      <text x="548" y="196">1</text>
      <text x="343" y="253" className="text-[20px]">2</text>
      <text x="773" y="262">4</text>
      <text x="510" y="288" textLength="91">word=sword</text>
      <text x="664" y="258" textLength="26">нет</text>
      <text x="513" y="391">Bingo=true</text>
      <text x="530" y="501">Конец</text>
      <path d="M510 291.500h91" stroke="#0a8a0a" strokeWidth="1.500" strokeDasharray="2 1.500" />
    </svg>
  );
}

/* ---------- right page ---------- */

const Gr = ({ children }: { children: React.ReactNode }) => (
  <span className="underline decoration-[#0a8a0a] decoration-wavy decoration-[0.8px] underline-offset-1">{children}</span>
);
const Rd = ({ children }: { children: React.ReactNode }) => (
  <span className="underline decoration-[#e01010] decoration-wavy decoration-[0.8px] underline-offset-1">{children}</span>
);

const PARTS: [string, React.ReactNode][] = [
  ["w-[657px]", "Для работы программы не требуется установка. Чтобы начать поиск, в"],
  ["w-[645px]", "поля нужно ввести слово для поиска. Оно не должно"],
  ["w-[480px]", "быть с пробелом и пунктуационных знаков."],
  ["w-[683px]", "В разделе «Файл» можно открыть/сохранить текст, выйти"],
  ["w-[624px]", "В разделе «Настройки» для первого задания можно"],
  ["w-[594px]", <>сделать предложение». Этот пункт <Gr>означает</Gr> что</>],
  ["w-[579px]", "содержащие искомый файл выделено не будет."],
  ["w-[534px]", <>В разделе можно выбрать <Rd>скин</Rd> программы.</>],
  ["w-[642px]", "поля уже присутствует слово «тест», а окно текста"],
  ["w-[408px]", "с несколькими предложениями."],
  ["w-[276px]", "программы"],
];

function RightPage() {
  return (
    <div className="flex h-[953px] w-[876px] shrink-0 flex-col overflow-hidden bg-white font-['Liberation_Serif'] text-[17.6px] leading-[20.3px] text-black">
      <div className="h-[400px] shrink-0 pl-[125px] pt-[5px]">
        <div className="h-[30px] text-[20.500px] font-bold leading-[26px]"><F w={248}>Инструкция пользователя</F></div>
        <div className="pl-[40px]"><F w={80}>Описание:</F></div>
        <div className="pl-[40px]"><F w={563}>Программа предназначена для поиска ключевого слова, которое введено с</F></div>
        <div><F w={94}>клавиатуры.</F></div>
        <div className="pl-[40px]"><F w={618}>При поиске предоставляется возможность осуществлять его по вхождению/слово</F></div>
        <div className="w-[271px] text-right">целиком и с учетом регистров.</div>
        <div className="h-[40.6px]" />
        {PARTS.map(([w, t], i) => (
          <div key={i} className={"flex justify-end whitespace-pre " + w}><span>{t}</span></div>
        ))}
      </div>

      <div className="ml-[204px] grid w-[610px] shrink-0 grid-cols-[325px_284px] grid-rows-[21px_62px_55px_51px_143px_42px] border-l border-t border-black [&>div]:border-b [&>div]:border-r [&>div]:border-black">
        <div />
        <div className="pl-[8px]"><F w={90}>Назначение</F></div>
        <div />
        <div className="pl-[8px]"><F w={247}>Кнопка выполнения поиска, под</F><br /><F w={237}>кнопкой выводиться результат.</F></div>
        <div />
        <div className="pl-[8px]"><F w={187}>Эти флажки отвечают за</F><br /><F w={142}>параметры поиска.</F></div>
        <div />
        <div className="pl-[8px]"><F w={249}><>Ключевое поле, из него <Rd>береться</Rd></></F><br /><F w={134}>слово для поиска.</F></div>
        <div className="pl-[7px]">
          <div className="h-[131px] w-[262px] border-[5px] border-t-2 border-[#8c8c92] bg-white pr-[43px] pt-[2px] text-right font-['Open_Sans'] text-[8px] leading-[10px] text-[#333]">Главное чтобы</div>
        </div>
        <div className="pl-[8px]"><F w={239}>Поле текста, где производиться</F><br /><F w={45}>поиск</F></div>
        <div className="pl-[7px]">
          <div className="flex h-[25px] w-[310px] flex-col overflow-hidden border-b-[3px] border-r-2 border-black bg-[#8c8c92] px-[4px]">
            <div className="flex h-[10px] shrink-0 overflow-hidden bg-[#f2f2f2] pl-px font-['Open_Sans'] text-[9px] leading-[14px] text-[#333]">
              <F w={111}>#pragma link "sColorSelect"</F>
              <div className="ml-auto h-full w-[12px] bg-[#16161a] px-[3px] pt-[7px]"><div className="h-[3px] bg-[#1f8cff]" /></div>
            </div>
            <div className="h-[9px] shrink-0 bg-[#141416] py-px"><div className="h-[7px] w-[31px] border border-[#1450d0] bg-[#4ab8ff]" /></div>
          </div>
        </div>
        <div className="pl-[8px]"><F w={206}>Полоска в низу при поиске</F><br /><F w={162}>отображает прогресс.</F></div>
      </div>

      <div className="flex shrink-0 flex-col pl-[218px] pt-[18px]">
        <div className="flex h-[22px]"><span className="w-[26px]">5.</span><F w={550}>Найденное слово из ключевого поля выделает  в тексте красным цветом,</F></div>
        <div className="h-[20px] pl-[26px]"><F w={490}>само предложение с этим словом выделается толстым шрифтом.</F></div>
        <div className="-ml-[22px] flex h-[20px]">
          <svg viewBox="0 0 12 12" className="mr-[10px] mt-[7px] size-[12px]"><path d="M.5.5h11v11H.500zM6 2v8M2 6h8M4.500 3.500L6 2l1.500 1.500M4.500 8.500L6 10l1.500-1.500M3.500 4.500L2 6l1.500 1.500M8.500 4.500L10 6 8.500 7.500" fill="#fff" stroke="#000" /></svg>
          <span className="w-[31px]">6.</span><F w={177}>Сообщения программы</F>
        </div>
      </div>

      <div className="ml-[209px] grid w-[610px] shrink-0 grid-cols-[167px_252px_190px] grid-rows-[21px_120px] border-l border-t border-black [&>div]:border-b [&>div]:border-r [&>div]:border-black">
        <div className="text-center"><F w={53}>Статус</F></div>
        <div className="text-center"><F w={88}>Сообщение</F></div>
        <div className="text-center"><F w={68}>Причина</F></div>
        <div className="flex flex-col items-center pr-[4px] pt-[11px]">
          <svg viewBox="0 0 36 36" className="size-[36px]">
            <circle cx="18" cy="18" r="17" fill="#d9d9d9" stroke="#999" />
            <circle cx="18" cy="18" r="15" fill="#c01818" />
            <path d="M4 17a14 13 0 0 1 28 0c-8 4-20 4-28 0z" fill="#e25a50" />
            <path d="M12 12l12 12M24 12L12 24" stroke="#fff" strokeWidth="4.500" />
          </svg>
          <F w={62} c="mt-[6px]">Ошибка</F>
        </div>
        <div className="pl-[8px]"><F w={206}>Неверное слово для поиска</F><br /><F w={163}>Оно должно быть без</F><br /><F w={70}>пробелов</F><br /><F w={209}>И не содержать знаки !.?:.;"</F></div>
        <div className="pl-[7px]"><F w={133}><Gr>В ключевом поле</Gr></F><br /><F w={133}><Gr>пустое или в нем </Gr></F><br /><F w={113}><Gr>недопустимые </Gr></F><br /><F w={71}><Gr>символы.</Gr></F></div>
      </div>
    </div>
  );
}

/* ---------- Total Commander ---------- */

type Row = [string, string, string, string?];
const LEFT: Row[] = [
  ["up", "..", ""], ["file", "Project1", "#00"], ["bmp", "132", "bmp", "text-[#ff9632]"], ["file", "Project1", "brow_pch"],
  ["smile", "Project1", "exe", "text-[#00f000]"], ["file", "Project1", "ilc"], ["file", "Project1", "ild"],
  ["file", "Project1", "ilf"], ["file", "Project1", "ils"], ["film", "", ""],
];
const RIGHT: Row[] = [
  ["folder", "1111111111111111", ""], ["folder", "Game", ""], ["folder", "My", ""], ["folder", "OldVersions", ""],
  ["folder", "Program", ""], ["folder", "Институт", ""], ["file", "Чертеж", "cdw"], ["word", "Тест1", "doc", "text-[#6ea8f0]"],
  ["dwg", "bodrilin_samrab5", "dwg"], ["dwg", "Деталь for AutoCad_В.23 Д-1", "dwg"], ["dwg", "ИЗ_3", "dwg"],
  ["dwg", "ИЗ_4", "dwg"], ["dwg", "ИЗ_5", "dwg"], ["png", "bodrilin_samrab5", "png", "text-[#ff9632]"],
  ["png", "image1", "png", "text-[#ff9632]"], ["file", "~WRD0003", "tmp"], ["file", "~ИЗ_5.dwg", "tmp"],
];
const WIDTHS: Record<string, number> = {
  "1111111111111111": 96, Game: 28, OldVersions: 56, Program: 38, "Институт": 46, "Чертеж": 38, "Тест1": 29,
  bodrilin_samrab5: 80, "Деталь for AutoCad_В.23 Д-1": 146, Project1: 38, brow_pch: 47, "132": 18, image1: 34,
  "~WRD0003": 58, "~ИЗ_5.dwg": 57, "ИЗ_3": 28, "ИЗ_4": 28, "ИЗ_5": 28, exe: 17, bmp: 20, "#00": 19, dwg: 20,
};

const SmallBtn = ({ children, c = "h-[20px]" }: { children: React.ReactNode; c?: string }) => (
  <div className={"flex w-[18px] shrink-0 items-center justify-center rounded-[4px] border border-[#77777a] bg-gradient-to-b from-[#d8d8d8] to-[#a8a8a8] shadow-[inset_0_0_0_1px_#d8d8d8] " + c}>{children}</div>
);

function Tab({ t, w, c, on }: { t: string; w: number; c: string; on?: boolean }) {
  return (
    <div className={"flex shrink-0 justify-center border border-b-0 border-l-[#d8d8d8] border-r-[#66666e] border-t-[#66666e] bg-gradient-to-b text-[#111] " + (on ? "h-[21px] from-[#a4a4aa] to-[#8e8e94] pt-[2px] " : "h-[18px] from-[#a0a0a6] to-[#8c8c92] pt-px ") + c}>
      <F w={w}>{t}</F>
    </div>
  );
}

function Panel(p: { icon: string; drive: string; info: string; iw: number; tabs: React.ReactNode; path: React.ReactNode; dark?: boolean; rows: Row[]; stripe: string; status: React.ReactNode }) {
  return (
    <div className="flex w-[387px] flex-col">
      <div className="flex h-[27px] items-start pt-[3px]">
        <div className="flex h-[22px] w-[48px] shrink-0 bg-white">
          <div className="flex w-[32px] items-center gap-[2px] pl-[3px]"><I n={p.icon} /><span className="text-[13px]">{p.drive}</span></div>
          <div className="flex w-[16px] items-center justify-center border border-[#333] bg-black">
            <svg viewBox="0 0 8 7" className="h-[7px] w-[8px]"><path d="M0 0h8L4 7z" fill="#2ca0ff" /></svg>
          </div>
        </div>
        <F w={p.iw} c="ml-[2px] mt-[3px]">{p.info}</F>
        <div className="ml-auto flex gap-px"><SmallBtn>\</SmallBtn><SmallBtn>..</SmallBtn></div>
      </div>
      <div className="flex h-[21px] items-end border-b border-[#707078] pl-[3px]">{p.tabs}</div>
      <div className="flex h-[19px] items-center pl-[2px]">
        <div className={"flex h-[15px] w-[347px] shrink-0 items-center pl-[2px] " + (p.dark ? "bg-[#2a2a30] text-[#77777c]" : "bg-black text-white")}>
          <svg viewBox="0 0 8 4" className="mr-px h-[4px] w-[8px]"><path d="M0 0h8L4 4z" fill="currentColor" /></svg>
          {p.path}
        </div>
        <div className="ml-auto flex gap-[1px]">
          <SmallBtn c="h-[17px]"><span className="pt-[5px] text-[16px] leading-[10px]">*</span></SmallBtn>
          <SmallBtn c="h-[17px]"><svg viewBox="0 0 8 5" className="h-[5px] w-[9px]"><path d="M0 0h8L4 5z" /></svg></SmallBtn>
        </div>
      </div>
      <div className="flex h-[18px] items-center border-b border-[#888] bg-gradient-to-b from-white to-[#ececec] pt-[2px]">
        <div className="w-[95px] border-r border-[#d8d8d8] pl-[2px]"><F w={22}>Имя</F></div>
        <div className="flex w-[97px] items-center gap-[3px] border-r border-[#d8d8d8] pl-[4px]">
          <svg viewBox="0 0 7 9" className="h-[9px] w-[7px]"><path d="M3.500 0L7 4H4.500v5h-2V4H0z" /></svg><F w={18}>Тип</F>
        </div>
        <div className="w-[97px] border-r border-[#d8d8d8] pl-[5px]"><F w={39}>Размер</F></div>
        <div className="pl-[6px]"><F w={26}>Дата</F></div>
      </div>
      <div className="ml-[1px] h-[347px] overflow-hidden border border-[#e8e8e8] bg-black text-white">
        {p.rows.map(([ic, name, ext, col], i) => (
          <div key={i} className={"flex h-[16px] items-center pr-px " + p.stripe + (i % 2 ? " bg-[#171717] " : " ") + (col || "")}>
            <I n={ic} c="ml-px size-[15px]" />
            {name && <F w={WIDTHS[name]} c="ml-px">{name}</F>}
            {ext && <span className="ml-auto"><F w={WIDTHS[ext]}>{ext}</F></span>}
          </div>
        ))}
      </div>
      <div className="mt-[1px] flex h-[18px] items-center border-r border-t border-[#808086] text-[#111]">{p.status}</div>
    </div>
  );
}

const TB1 = ["|", "up", "|", "go", "off", "|", "tool", "bird", "chart", "broom", "balls", "|", "rar", "UPX", "smbox", "box", "box", "7Z", "|", "hammer", "cube3", "key", "disk", "vv", "face", "greenbook", "wordg", "excel", "feather", "film"];
const TB2 = ["film", "ie", "calc", "|", "net", "netx", "cd1", "cd2", "dr", "cam"];

function TcIcon({ n }: { n: string }) {
  if (n === "|") return <div className="flex h-[26px] w-[9px] shrink-0 justify-center"><div className="w-px bg-[#5c5c64]" /></div>;
  if (n === "UPX" || n === "7Z")
    return (
      <div className="flex w-[29px] shrink-0 justify-center">
        <div className="flex h-[17px] w-[17px] flex-col bg-black text-center font-['Liberation_Mono'] text-[8px] font-bold leading-[9px] text-white">
          <span>{n}</span>
          <span className="mx-px h-[7px] bg-white text-[6px] leading-[7px] text-black">{n === "UPX" ? "SHELL" : "SFX"}</span>
        </div>
      </div>
    );
  return <div className="flex w-[29px] shrink-0 justify-center"><I n={n} c="size-[17px]" /></div>;
}

const TCMENU: [string, number, string?][] = [
  ["&Файлы", 38], ["&Выделение", 61], ["&Навигация", 58], ["&Сеть", 25], ["&FTP", 19], ["Ви&д", 20], ["Вк&ладки", 45],
  ["&Конфигурация", 82], ["&Инструменты", 76], ["&Запуск", 38], ["Системные &папки", 99, "ml-[8px]"], ["Сп&равка", 46],
];

function Commander() {
  return (
    <div className="absolute left-[560px] top-[300px] flex h-[599px] w-[800px] flex-col rounded-[4px] border border-black bg-gradient-to-b from-[#0c0c0e] via-[#1c1c1e] to-black px-[7px] font-['Liberation_Sans'] text-[12px] leading-[16px] text-[#111] shadow-[0_2px_14px_rgba(0,0,0,0.85),inset_0_0_0_1px_#3a3a3c]">
      <div className="-mx-[6px] mt-px flex h-[31px] shrink-0 bg-gradient-to-r from-[#303032] via-[#040406] via-30% to-[#040406] pl-[6px]">
        <I n="disk" c="mt-[7px] size-[16px]" />
        <F w={267} c="ml-[5px] mt-[6px] font-['Open_Sans'] text-[13px] font-bold text-white">Total Commander 7.50a - INTEL MATAM HAIFA</F>
        <div className="ml-auto mr-[21px]"><Caption color="#5a5a5e" /></div>
      </div>
      <div className="flex h-[559px] w-[784px] flex-col bg-[#aaaaac]">
        <div className="flex h-[20px] shrink-0 items-center gap-[14px] border-b border-[#6e6e76] bg-gradient-to-r from-[#a6a6aa] via-[#8f8f94] via-30% to-[#8b8b90] pl-[7px] font-['Open_Sans'] text-[12px] text-[#68686e]">
          {TCMENU.map(([t, w, c]) => <F key={t} w={w} c={c}>{t}</F>)}
        </div>
        <div className="mt-[2px] flex h-[31px] shrink-0 items-center border-b border-t border-b-[#6e6e76] border-t-[#6e6e76] bg-gradient-to-r from-[#a6a6aa] via-[#909095] via-30% to-[#8b8b90] pb-px">
          {TB1.map((n, i) => <TcIcon key={i} n={n} />)}
        </div>
        <div className="flex h-[32px] shrink-0 items-center border-b border-t border-b-[#6e6e76] border-t-[#c4c4c8] bg-gradient-to-r from-[#a6a6aa] via-[#909095] via-30% to-[#8b8b90]">
          {TB2.map((n, i) => <TcIcon key={i} n={n} />)}
        </div>
        <div className="flex shrink-0 justify-between pl-[1px] pr-[3px]">
          <Panel
            icon="hdd" drive="d" info="[data slava]  363 251,1 Мб из 715 401,9 Мб свободно" iw={262}
            tabs={<><Tab t="музыч" w={32} c="w-[43px]" /><Tab t="orangebox" w={51} c="w-[61px]" /><Tab t="Debug" w={31} c="w-[47px]" on /></>}
            path={<><F w={309}>d:\Slava\Прочее\институт\Програмирование\Практика\Deb</F><svg viewBox="0 0 5 8" className="ml-[6px] h-[8px] w-[5px]"><path d="M0 0v8l5-4z" fill="#fff" /></svg></>}
            rows={LEFT} stripe="w-[108px]"
            status={<><F w={17} c="ml-[172px]">exe</F><F w={31} c="ml-[56px]">3,7 Мб</F><F w={84} c="ml-[8px]">07.07.2010 19:57</F></>}
          />
          <Panel
            icon="usb" drive="k" info="[leporel]  139,0 Мб из 3 892,3 Мб свободно" iw={211}
            tabs={<><Tab t="addons" w={35} c="w-[46px]" /><Tab t="mani_admin_plugin" w={90} c="w-[101px]" /><Tab t="SteamServerGamesTwo" w={115} c="w-[127px]" /><Tab t="k:" w={10} c="w-[44px] !justify-start pl-[6px]" on /></>}
            path={<span>k:\*.*</span>} dark
            rows={RIGHT} stripe="w-[188px]"
            status={<><F w={95} c="ml-[3px]">1111111111111111</F><F w={133} c="ml-auto mr-[19px]">{"<Папка> 22.06.2010 17:42"}</F></>}
          />
        </div>
        <div className="mt-px flex h-[22px] shrink-0 gap-[3px] pl-px">
          {([["F3 Просмотр", 62], ["F4 Правка", 52], ["F5 Копирование", 82], ["F6 Перемещение", 88], ["F7 Каталог", 55], ["F8 Удаление", 65]] as [string, number][]).map(([t, w]) => (
            <div key={t} className="flex h-[20px] w-[108px] shrink-0 items-center justify-center rounded-[4px] border border-[#707074] bg-gradient-to-b from-[#dadadc] to-[#a2a2a4] shadow-[inset_0_0_0_1px_#d0d0d2]"><F w={w}>{t}</F></div>
          ))}
          <div className="flex h-[20px] w-[115px] shrink-0 items-center justify-center rounded-[4px] border border-[#707074] bg-gradient-to-b from-[#dadadc] to-[#a2a2a4] shadow-[inset_0_0_0_1px_#d0d0d2]"><F w={66}>Alt+F4 Выход</F></div>
        </div>
      </div>
    </div>
  );
}

/* ---------- search window ---------- */

const Check = ({ t, w }: { t: string; w: number }) => (
  <div className="flex h-[23px] items-center">
    <div className="size-[13px] border border-[#1a1a1a] bg-gradient-to-br from-[#555] via-black to-[#222]" />
    <F w={w} c="ml-[3px]">{t}</F>
  </div>
);

function SearchWindow() {
  return (
    <div className="absolute left-[233px] top-[652px] flex h-[360px] w-[465px] flex-col rounded-[4px] border border-black bg-gradient-to-b from-[#0c0c0e] via-[#1c1c1e] to-black px-[7px] font-['Noto_Sans'] text-[11.500px] leading-[16px] text-[#111] shadow-[0_4px_16px_rgba(0,0,0,0.9),inset_0_0_0_1px_#3a3a3c]">
      <div className="-mx-[6px] mt-px flex h-[30px] shrink-0 bg-gradient-to-r from-[#343436] via-[#040406] via-40% to-[#1a1a1c] pl-[6px]">
        <I n="smile" c="mt-[6px] size-[15px]" />
        <F w={110} c="ml-[6px] mt-[6px] font-['Open_Sans'] text-[12px] font-bold text-white">Колесистая дорога</F>
        <div className="ml-auto mr-[21px]"><Caption color="#1e8cff" glow /></div>
      </div>
      <div className="flex h-[320px] w-[449px] flex-col bg-[#aaaaac]">
        <div className="flex h-[19px] shrink-0 items-center gap-[14px] border-b border-[#d8d8da] bg-gradient-to-r from-[#aeaeb2] via-[#909095] via-40% to-[#8d8d92] pl-[7px] pt-px text-[12px]">
          <F w={29}>Файл</F><F w={60}>Настройки</F><F w={32}>Инфо</F>
        </div>
        <div className="flex h-[21px] shrink-0 items-end pl-[1px] pt-px">
          <div className="flex h-[20px] w-[65px] items-center justify-center rounded-t-sm border border-b-0 border-[#c8c8cc] border-r-[#66666e] bg-gradient-to-b from-[#a4a4aa] to-[#8e8e94] pb-px"><F w={50}>1 задание</F></div>
          <div className="flex h-[18px] w-[61px] items-center justify-center border border-b-0 border-[#66666e] border-l-[#ccc] bg-gradient-to-b from-[#a0a0a6] to-[#88888e]"><F w={50}>2 задание</F></div>
        </div>
        <div className="flex h-[279px] flex-col border border-[#b8b8bc] bg-[#8f8f95] px-[5px] shadow-[inset_0_0_0_1px_#707078]">
          <div className="flex h-[55px] shrink-0">
            <div className="flex w-[198px] flex-col">
              <F w={88} c="ml-[29px] mt-[5px] self-start">Ключевое слово:</F>
              <div className="ml-[38px] mt-[4px] flex h-[24px] w-[145px] items-center border border-[#6a6a70] bg-white pl-[2px] text-[12.500px]"><F w={25}>тест</F></div>
            </div>
            <div className="flex w-[151px] flex-col pt-[3px]"><Check t="Слово целиком" w={76} /><Check t="С учетом регистра" w={95} /></div>
            <div className="flex flex-col items-center pt-[6px]">
              <div className="flex h-[24px] w-[60px] items-center justify-center rounded-[4px] border border-[#2b5fd0] bg-gradient-to-b from-[#8fd4ff] to-[#4aa8f4]"><F w={36}>Искать</F></div>
              <F w={58} c="mt-[5px]">Найдено: 2</F>
            </div>
          </div>
          <div className="ml-[1px] h-[217px] shrink-0 border border-[#6a6a70] bg-white pl-[2px] pt-[3px] text-[12px] leading-[16px] text-black">
            <F w={357}><><b className="text-[#f01010]">Тест</b> номер Один или два? А какая разница. Главное чтобы</></F><br />
            <F w={205}><><b className="text-[#f01010]">тест</b>ирование  работало. Правда?</></F><br />
            <F w={139}>Хотя все может быть...</F>
          </div>
        </div>
      </div>
    </div>
  );
}

/* ---------- Word status bar ---------- */

const Cell = ({ c, children }: { c: string; children?: React.ReactNode }) => (
  <div className={"flex h-[17px] shrink-0 items-center border border-b-0 border-[#cacacc] " + c}>{children}</div>
);

export default function App() {
  return (
    <div className="relative flex h-[1200px] w-[1920px] flex-col overflow-hidden bg-[#aeaeae] font-['Open_Sans'] text-[12px] leading-[16px] text-black">
      {/* title bar */}
      <div className="flex h-[25px] shrink-0 items-center bg-gradient-to-r from-[#3a3a3c] via-[#020204] via-15% to-[#020204]">
        <I n="word" c="size-[15px]" />
        <F w={190} c="ml-[6px] font-bold text-[#0a84f0]">Задание_v2.doc - Microsoft Word</F>
        <div className="mb-[5px] ml-auto mr-[18px]"><Caption color="#4a4a4e" /></div>
      </div>

      {/* command bars */}
      <div className="flex h-[130px] shrink-0 flex-col bg-gradient-to-r from-[#aeaeae] via-[#ececec] via-40% to-[#ececec]">
        <div className="flex h-[26px] shrink-0 items-center pl-[4px]">
          <Grip />
          <div className="ml-[8px] flex gap-4">{MENU.map(([t, w]) => <F key={t} w={w}>{t}</F>)}</div>
          <div className="ml-auto flex items-center">
            <div className="flex h-[20px] w-[177px] items-center bg-white"><F w={86} c="ml-[3px] text-[#555]">Введите вопрос</F><div className="ml-auto flex h-[18px] w-[12px] items-center bg-[#e6e6e6]"><Arr /></div></div>
            <svg viewBox="0 0 8 8" className="ml-[6px] mr-[7px] size-[8px]"><path d="M.5.5l7 7M7.500.500l-7 7" stroke="#000" strokeWidth="1.700" /></svg>
          </div>
        </div>

        <div className="flex h-[26px] shrink-0 pl-[3px]">
          <Bar c="w-[770px]">
            <B n="doc" /><B n="open" /><B n="save" /><B n="perm" /><B n="mail" /><Sep />
            <B n="print" /><B n="preview" /><Sep c="w-[6px]" /><B n="spell" /><B n="research" /><Sep c="w-[5px]" />
            <B n="cut" /><B n="copy" /><B n="paste" /><B n="brush" /><Sep c="w-[6px]" />
            <B n="undo" /><Arr /><B n="redo" /><Arr g /><Sep c="w-[6px]" />
            <B n="globe" /><B n="tblpen" /><B n="tbl" /><B n="xltbl" /><B n="cols" /><B n="draw" on /><Sep />
            <B n="map" /><B n="para" /><Combo c="w-[66px]" t="110%" w={29} />
            <div className="w-[2px]" /><B n="help" /><Sep c="w-[5px]" /><B n="book" /><F w={39}>&Чтение</F>
          </Bar>
          <Bar c="ml-[150px] w-[42px]"><B n="redbook" /></Bar>
          <Bar c="ml-[169px] w-[786px]">
            <B n="aa" /><Combo c="w-[118px]" t="Сетка таблицы" w={82} /><Combo c="ml-[2px] w-[151px]" t="Times New Roman" w={100} /><Combo c="ml-[2px] w-[57px]" t="12" w={13} />
            <Sep c="w-[6px]" />
            <b className="w-[23px] text-center font-['Liberation_Serif'] text-[15px]">Ж</b>
            <b className="w-[23px] text-center font-['Liberation_Serif'] text-[15px] italic">К</b>
            <b className="w-[23px] text-center font-['Liberation_Serif'] text-[15px] underline">Ч</b>
            <Sep /><B n="al" on /><B n="ac" /><B n="ar" /><B n="aj" /><B n="sp" /><Arr /><Sep c="w-[5px]" />
            <B n="num" /><B n="bul" /><B n="outd" /><B n="ind" /><Sep c="w-[6px]" />
            <B n="bord" on /><Arr /><B n="hi" /><Arr /><B n="fa" /><Arr />
          </Bar>
        </div>

        <div className="flex h-[26px] shrink-0 justify-end pr-[30px]">
          <Bar c="w-[360px]">
            <B n="pic" /><Sep c="w-[6px]" /><B n="color" /><B n="cu" /><B n="cd" /><B n="bu" /><B n="bd" /><Sep c="w-[6px]" />
            <B n="crop" /><B n="rot" /><B n="thick" /><B n="compress" /><B n="wrap" /><B n="bucketg" /><B n="trans" /><Sep c="w-[6px]" /><B n="reset" />
          </Bar>
        </div>

        <div className="flex h-[26px] shrink-0 pl-[3px]">
          <Bar c="w-[586px]">
            <Combo c="w-[257px] ml-px" t="Исправления в измененном документе" w={219} />
            <F w={51} c="ml-[4px]">По&казать</F><Arr /><Sep c="w-[7px]" />
            <B n="prev" /><B n="next" /><B n="accept" /><Arr /><B n="reject" /><Arr /><Sep c="w-[6px]" />
            <B n="note" /><B n="hi" /><Arr /><Sep c="w-[6px]" /><B n="track" /><Sep c="w-[6px]" /><B n="pane" />
          </Bar>
        </div>

        <div className="flex h-[26px] shrink-0 pl-[3px]">
          <Bar c="w-[368px]">
            <B n="ct" /><F w={102}>Open In Contribute</F><div className="w-[3px]" />
            <B n="pub" /><F w={101}>Publish To Website</F><div className="w-[3px]" /><B n="blog" /><F w={67}>Post To Blog</F>
          </Bar>
        </div>
      </div>

      {/* document */}
      <div className="flex h-[997px] shrink-0 border-t-2 border-[#6b6b78]">
        <div className="flex w-[1902px] flex-col border-l border-[#8a8a90]">
          <div className="flex h-[24px] shrink-0 items-center bg-[#aeaeae]">
            <div className="ml-[4px] flex h-[15px] w-[16px] items-center justify-center border border-[#6b6b78]">
              <svg viewBox="0 0 6 6" className="size-[6px]"><path d="M1 0v5h5" fill="none" stroke="#000" strokeWidth="2" /></svg>
            </div>
            <div className="w-0"><HRuler /></div>
          </div>
          <div className="flex h-[953px] shrink-0 bg-[#6a6c78] pl-[5px]">
            <VRuler />
            <div className="w-[5px] bg-[#aeaeae]" />
            <div className="ml-[51px] border-l border-black bg-white"><FlowChart /></div>
            <div className="w-[3px] bg-black" />
            <div className="w-[14px]" />
            <div className="w-px bg-black" />
            <RightPage />
            <div className="w-[3px] bg-black" />
          </div>
          <div className="flex h-[16px] shrink-0 items-center bg-[#aeaeae] pl-[2px]">
            <div className="flex w-[16px] justify-center"><I n="v1" c="size-[13px]" /></div>
            <div className="flex w-[15px] justify-center"><I n="v2" c="size-[13px]" /></div>
            <div className="flex h-[16px] w-[16px] items-center justify-center border border-[#4aa0f0] bg-[#cfdcea]"><I n="v3" c="size-[12px]" /></div>
            <div className="flex w-[16px] justify-center"><I n="v4" c="size-[13px]" /></div>
            <div className="flex w-[17px] justify-center"><I n="v5" c="size-[13px]" /></div>
            <div className="flex h-[16px] flex-1 items-center bg-black">
              <svg viewBox="0 0 16 16" className="size-4 bg-[#18181c]"><path d="M11 3v10L5 8z" fill="#1e9cff" /></svg>
              <div className="flex h-[14px] flex-1 items-center justify-center rounded-sm border border-[#4a4a4c] bg-gradient-to-b from-[#3c3c3e] to-[#1c1c1e]"><i className="h-[3px] w-[6px] rounded-sm bg-[#4cc0ff] shadow-[0_0_2px_1px_#0a3cff]" /></div>
              <svg viewBox="0 0 16 16" className="ml-[3px] size-4 bg-[#18181c]"><path d="M5 3v10l6-5z" fill="#1e9cff" /></svg>
            </div>
          </div>
        </div>
        <div className="flex w-[16px] flex-col bg-[#aeaeae]">
          <div className="h-[9px] border border-[#777] bg-[#c4c4c4]" />
          <div className="flex h-[920px] flex-col items-center bg-gradient-to-r from-[#2c2c2e] via-black to-[#2c2c2e]">
            <svg viewBox="0 0 16 18" className="h-[18px] w-4"><path d="M8 5l5 9H3z" fill="#1e9cff" /></svg>
            <div className="h-[132px] w-[2px] bg-black" />
            <div className="flex h-[47px] w-[14px] items-center justify-center rounded-sm border border-[#5a5a5c] bg-gradient-to-r from-[#3a3a3c] to-[#161618]"><i className="h-[6px] w-[3px] rounded-sm bg-[#4cc0ff] shadow-[0_0_2px_1px_#0a3cff]" /></div>
            <svg viewBox="0 0 16 18" className="mt-auto h-[18px] w-4"><path d="M8 14l5-8H3z" fill="#1e9cff" /></svg>
          </div>
          <svg viewBox="0 0 16 64" className="h-[64px] w-4">
            <path d="M8 4l3.500 4h-7zM8 8l3.500 4h-7zM8 12v1M4.500 8h7M4.500 42h7M8 44l3.500-4h-7zM8 48l3.500-4h-7z" fill="#111" />
            <circle cx="8" cy="23" r="3.600" fill="#ddd" stroke="#222" strokeWidth="1.300" />
          </svg>
        </div>
        <div className="w-[2px] bg-[#dcdcdc]" />
      </div>

      {/* drawing toolbar */}
      <div className="flex h-[27px] shrink-0 items-center border-b border-[#6b6b78] bg-gradient-to-r from-[#b4b4b4] via-[#ececec] via-35% to-[#ececec] pl-[3px]">
        <Bar c="w-[639px]">
          <F w={60} c="ml-[3px]">&Рисование</F><Arr c="w-[11px]" /><B n="cursor" /><Sep c="w-[8px]" />
          <F w={70} c="ml-[2px]">Автофи&гуры</F><Arr c="w-[11px]" />
          <B n="line" /><B n="arrow" /><B n="rect" /><B n="oval" /><B n="txt" /><B n="wa" /><B n="diag" /><B n="clip" /><B n="pic" /><Sep c="w-[6px]" />
          <B n="bucket" /><Arr /><B n="pen" /><Arr /><B n="fa" /><Arr c="w-[10px]" /><B n="thick" /><B n="wdash" /><B n="arrs" /><B n="shadow" /><B n="cube" />
        </Bar>
      </div>

      {/* status bar */}
      <div className="flex h-[19px] shrink-0 items-end gap-[5px] border-t border-[#c8c8ca] bg-[#aeaeae] pl-[5px]">
        <Cell c="w-[213px]"><F w={37} c="ml-[5px]">Стр. 6</F><F w={38} c="ml-[35px]">Разд 1</F><F w={26} c="ml-[51px]">6/28</F></Cell>
        <Cell c="w-[182px]"><F w={59} c="ml-[3px]">На 12,8см</F><F w={33} c="ml-[10px]">Ст 22</F><F w={41} c="ml-[14px]">Кол 20</F></Cell>
        <Cell c="w-[29px] justify-center text-[#77777f]"><F w={21}>ЗАП</F></Cell>
        <Cell c="w-[35px] justify-center text-[#77777f]"><F w={30}>ИСПР</F></Cell>
        <Cell c="w-[29px] justify-center text-[#77777f]"><F w={23}>ВДЛ</F></Cell>
        <Cell c="w-[28px] justify-center text-[#77777f]"><F w={23}>ЗАМ</F></Cell>
        <Cell c="w-[75px] pl-[2px]"><F w={68}>русский (Ро</F></Cell>
        <Cell c="w-[47px] pl-[11px]"><I n="proof" c="h-[13px] w-[20px]" /></Cell>
        <Cell c="w-[37px]" />
        <Cell c="w-[27px]" />
        <Cell c="w-[31px]" />
      </div>
      <div className="h-[2px] shrink-0 bg-black" />

      <Commander />
      <SearchWindow />
    </div>
  );
}
